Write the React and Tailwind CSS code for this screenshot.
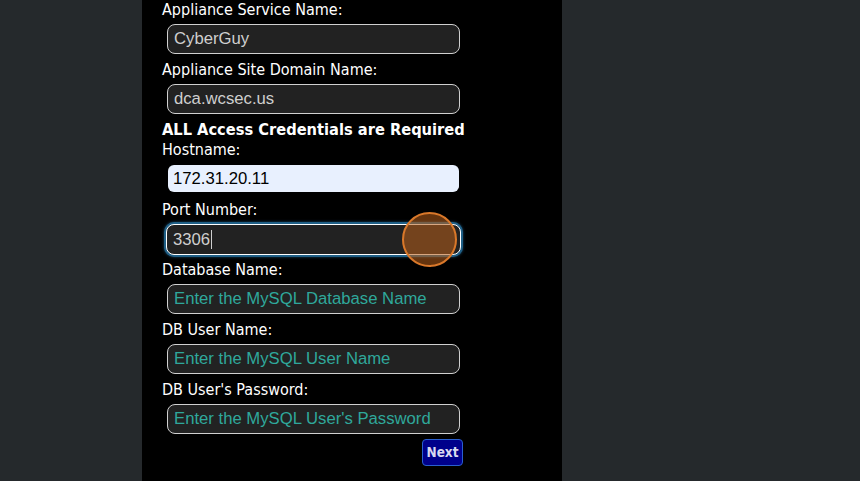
import React from 'react';

const label = "block h-5 leading-5 text-[16px] text-white font-['DejaVu_Sans_Condensed','DejaVu_Sans',sans-serif]";
const field =
  "mt-1 ml-[5px] block w-[293px] h-[30px] rounded-lg border border-[#d0d0d0] bg-[#222222] px-[6px] text-[16.7px] text-[#cfcfcf] font-['Liberation_Sans',Arial,sans-serif] outline-none placeholder:text-[#2fa89b]";

function Field({ name, value, placeholder }) {
  return (
    <div className="mb-[6px]">
      <label className={label}>{name}</label>
      <input className={field} defaultValue={value} placeholder={placeholder} />
    </div>
  );
}

export default function App() {
  return (
    <div className="flex h-[481px] w-[860px] overflow-hidden bg-[#25292c]">
      <div className="ml-[142px] h-full w-[420px] bg-black pl-5 pt-0">
        <Field name="Appliance Service Name:" value="CyberGuy" />
        <Field name="Appliance Site Domain Name:" value="dca.wcsec.us" />
        <div className="h-5 leading-5 text-[16.3px] font-bold text-white font-['DejaVu_Sans_Condensed','DejaVu_Sans',sans-serif]">
          ALL Access Credentials are Required
        </div>
        <div className="mb-[8px]">
          <label className={label}>Hostname:</label>
          <input
            className="mt-[5px] ml-[6px] block w-[291px] h-[27px] rounded-md bg-[#e8f0fe] px-[5px] text-[16.7px] text-black font-['Liberation_Sans',Arial,sans-serif] outline-none"
            defaultValue="172.31.20.11"
          />
        </div>
        <div className="relative mb-[5px]">
          <label className={label}>Port Number:</label>
          <div className="relative mt-1 ml-1 w-[295px]">
            <input
              className="block w-full h-[31px] rounded-lg border border-white bg-[#222222] px-[6px] text-[16.7px] text-[#cfcfcf] font-['Liberation_Sans',Arial,sans-serif] outline-none shadow-[0_0_0_2px_#1f5f86,0_0_3px_2px_#1b4a6a]"
              defaultValue="3306"
            />
            <span className="pointer-events-none absolute left-[45px] top-[6px] h-[19px] w-px bg-[#cfcfcf]" />
            <span className="pointer-events-none absolute left-[236px] top-[-12px] h-[55px] w-[55px] rounded-full border-2 border-[#d9782a] bg-[#b85e1a]/55" />
          </div>
        </div>
        <Field name="Database Name:" placeholder="Enter the MySQL Database Name" />
        <Field name="DB User Name:" placeholder="Enter the MySQL User Name" />
        <Field name="DB User's Password:" placeholder="Enter the MySQL User's Password" />
        <div className="-mt-[1px] flex w-[301px] justify-end">
          <button className="h-[27px] w-[41px] rounded-[4px] border border-[#2a5fcf] bg-[#00008b] text-[13.5px] font-bold text-[#d8d8f0] font-['DejaVu_Sans_Condensed','DejaVu_Sans',sans-serif]">
            Next
          </button>
        </div>
      </div>
    </div>
  );
}
